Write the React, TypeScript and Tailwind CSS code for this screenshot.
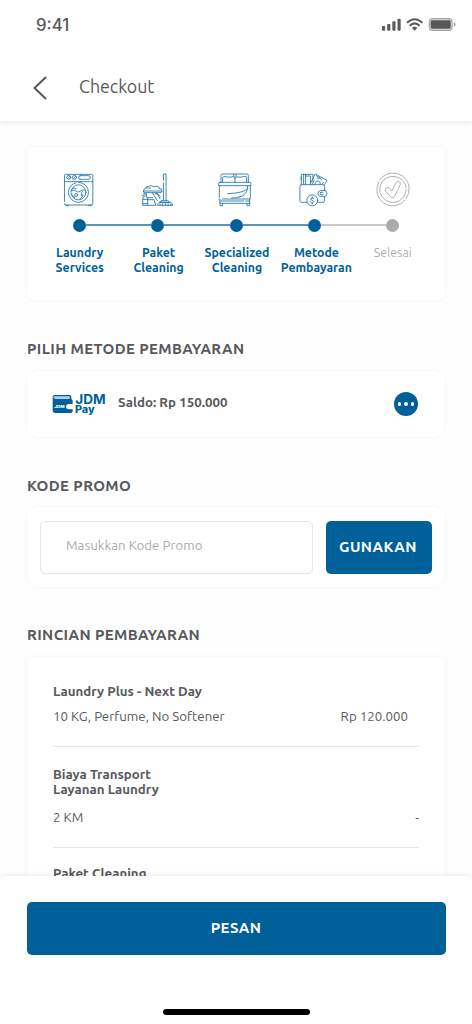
import type { ReactNode } from "react";

const CARD = "rounded-[6px] bg-white shadow-[0_0_4px_rgba(0,0,0,0.05)]";
const TITLE = "whitespace-nowrap text-[15px] font-semibold leading-[20px] tracking-[0.370px]";

function StatusIcons() {
  return (
    <svg width="76" height="16" viewBox="94 54 228 48" fill="#58595b">
      <rect x="97" y="81" width="9.500" height="14" rx="3" />
      <rect x="112.500" y="75" width="9.500" height="20" rx="3" />
      <rect x="128" y="67" width="9.500" height="28" rx="3" />
      <rect x="143.500" y="59" width="9.500" height="36" rx="3" />
      <g fill="none" stroke="#58595b" strokeWidth="6">
        <path d="M172 71.500Q195 50 218 71.500" />
        <path d="M180 80Q195 66.500 210 80" />
      </g>
      <path d="M187 87Q195 80 203 87L195 95Z" />
      <rect x="238.500" y="58.500" width="69" height="36" rx="9" fill="#d0d0d1" stroke="#a2a3a4" strokeWidth="3" />
      <rect x="243" y="64" width="60" height="25" rx="4" />
      <path d="M312 70Q318 72 318 76.500Q318 81 312 83Z" fill="#a8a9aa" />
    </svg>
  );
}

function StepIcon({ viewBox, gray, children }: { viewBox: string; gray?: boolean; children: ReactNode }) {
  return (
    <svg width="36" height="36" viewBox={viewBox} fill="none" stroke={gray ? "#aeaaaa" : "#2374a8"} strokeWidth={gray ? 2.8 : 2.6} strokeLinecap="round" strokeLinejoin="round">
      {children}
    </svg>
  );
}

const washer = (
  <StepIcon viewBox="33.600 36 108 108">
    <path d="M44 124V47Q44 43 48 43H125Q129 43 129 47V131Q129 135 125 135H48Q44 135 44 131M44 65H119M124 65H129M48 135V137H57M116 137H125V135" />
    <circle cx="57" cy="52" r="6" />
    <circle cx="74" cy="52" r="6" />
    <path d="M54 55L60 49M71 55L77 49" />
    <rect x="87" y="47" width="34" height="11" rx="4" />
    <path d="M86 67A30 30 0 0 1 116 97A30 30 0 0 1 56 97A30 30 0 0 1 78 68" />
    <circle cx="86" cy="97" r="22.500" />
    <path d="M65 92Q73 87 78 93T91 94Q97 86 106 91M67 87Q73 80 78 86M74 113Q70 105 67 104M98 94Q91 101 97 105T91 116" />
    <circle cx="79" cy="105" r="4.500" />
    <circle cx="96" cy="106" r="2" />
  </StepIcon>
);

const broom = (
  <StepIcon viewBox="268.800 36 108 108">
    <path d="M339 61V42H347V122M339 69V119M334 122H352Q355 122 357 127H328Q330 122 334 122ZM328 127H360Q365 128 367 136H321Q322 129 328 127M329 136V132M337 136V131M345 136V131M353 136V131M361 136V132" />
    <path d="M287 83Q288 77 295 79Q302 74 309 80Q316 77 322 80Q328 80 327 86Q334 84 335 91M279 95Q278 86 287 84H300M280 93H335L332 98H284L279 95M306 99L321 122M319 99L329 116M315 101Q323 100 330 109" />
    <path d="M280 101H288V106M279 107H275M281 104V111Q277 112 277 117V136H292V117Q292 112 287 111V104M277 118H292M277 131H292M292 113H307M292 119H311L316 136H292" />
  </StepIcon>
);

const bed = (
  <StepIcon viewBox="39 36 108 108">
    <path d="M48 66V45Q48 42 52 42H126Q130 42 130 46V66M53 66V53Q54 49 60 50Q74 53 88 50Q90 50 90 54V66M90 54Q91 49 97 51Q108 53 120 49Q125 49 125 54V66M86 43V49M93 43V49" />
    <path d="M42 67H135Q138 67 138 71V77H41V71Q41 67 45 67M43 77V112M136 77V117H52M43 117V120M128 78Q128 107 103 111M128 86Q118 99 68 101M103 111Q92 115 80 114" />
    <path d="M45 118V137H53V130H126V137H134V118M48 123H116M122 123H133M53 130H45M126 130H134" />
  </StepIcon>
);

const wallet = (
  <StepIcon viewBox="274.200 36 108 108">
    <path d="M360 91V79Q360 74 354 74H291Q286 74 286 79V122Q286 127 291 127H307M339 127H355Q360 127 360 121V110M290 74V43H325V65M297 43V73M303 43V73M303 48H318V73M290 50V60" />
    <path d="M316 73L332 42L367 61L360 74M323 73L328 62M335 47L347 54M338 54Q347 52 351 59M331 73Q332 61 341 63Q349 65 347 73M356 67L353 73" />
    <path d="M362 92H347Q340 93 340 101Q341 109 348 109H362Q367 108 367 101Q367 93 362 92M348 97H355M348 104H355M348 97Q344 101 348 104" />
    <circle cx="323" cy="121" r="16.500" />
    <path d="M328 116Q326 113 322 114Q317 116 320 120L325 122Q329 125 325 128Q320 129 318 126M323 110V114M323 128V132" />
  </StepIcon>
);

const done = (
  <StepIcon gray viewBox="134.400 96 108 108">
    <path d="M149 119A48 48 0 0 1 228 176M225 180A48 48 0 0 1 146 126" />
    <path d="M149 156A40 40 0 0 1 217 121M220 124A40 40 0 0 1 228 143M228 148A40 40 0 0 1 150 160" />
    <path d="M185 153L196 130Q199 124 205 124Q213 126 210 134L205 145M203 150L193 169Q189 176 182 171L167 155Q163 149 168 144Q174 139 179 145L185 152" />
  </StepIcon>
);

const steps = [
  { icon: washer, lines: ["Laundry", "Services"], pad: "pl-[1px]" },
  { icon: broom, lines: ["Paket", "Cleaning"], pad: "pl-[2px]" },
  { icon: bed, lines: ["Specialized", "Cleaning"], pad: "pl-[2px]" },
  { icon: wallet, lines: ["Metode", "Pembayaran"], pad: "pl-[4px]" },
  { icon: done, lines: ["Selesai"], pad: "" },
];

function lineColor(visible: boolean, gray: boolean) {
  if (!visible) return "bg-transparent";
  return gray ? "bg-[#cbc8c9]" : "bg-[#5595be]";
}

function Stepper() {
  return (
    <section className={`${CARD} grid h-[153px] grid-cols-5 px-[13px] pt-[25px]`}>
      {steps.map((s, i) => (
        <div key={i} className="flex min-w-0 flex-col items-center">
          {s.icon}
          <div className="mt-[11px] flex h-[13px] w-full items-center">
            <span className={`mb-px h-[2px] flex-1 ${lineColor(i > 0, i === 4)}`} />
            <span className={`size-[13px] rounded-full ${i === 4 ? "bg-[#aeaaaa]" : "bg-[#00609a]"}`} />
            <span className={`mb-px h-[2px] flex-1 ${lineColor(i < 4, i === 3)}`} />
          </div>
          <div className={`mt-[14px] flex flex-col items-center whitespace-nowrap text-[12.300px] leading-[14.500px] ${s.pad} ${i === 4 ? "text-[#b3afb0]" : "font-bold text-[#00609a]"}`}>
            {s.lines.map((l) => (
              <span key={l}>{l}</span>
            ))}
          </div>
        </div>
      ))}
    </section>
  );
}

function PayLogo() {
  return (
    <svg className="overflow-visible" width="54" height="21" viewBox="97 190 162 63" fill="#00609a">
      <path d="M99 198Q99 193 105 193H149Q155 193 155 199V205Q159 206 159 211V220H146Q139 221 139 228Q139 235 146 236H159V242Q159 247 153 247H107Q99 247 99 239Z" />
      <path d="M105 197H148Q151 197 151 200L149 205H107Q102 203 102 200Q103 197 105 197Z" fill="#b6d0e1" />
      <path d="M159 223H147Q142 223 142 228Q142 233 147 233H159V229H149V227H159Z" fill="#fff" />
      <text x="104" y="231" fontFamily="Inter, sans-serif" fontWeight="800" fontSize="10" textLength="31" lengthAdjust="spacingAndGlyphs" fill="#fff">JDM</text>
      <text x="167" y="221" fontFamily="Inter, sans-serif" fontWeight="700" fontSize="38" textLength="91" lengthAdjust="spacingAndGlyphs">JDM</text>
      <text x="166" y="246" fontFamily="Inter, sans-serif" fontWeight="800" fontSize="29" textLength="59" lengthAdjust="spacingAndGlyphs">Pay</text>
    </svg>
  );
}

export default function App() {
  return (
    <div className="flex h-[1024px] w-[472px] flex-col overflow-hidden bg-[#fefefe] font-['Ubuntu','Noto_Sans',sans-serif] text-[#58595b]">
      <header className="relative z-10 h-[121px] shrink-0 bg-white shadow-[0_2px_5px_rgba(0,0,0,0.08)]">
        <div className="flex h-[50px] items-center justify-between pl-[36px] pr-[15px]">
          <span className="font-['Inter',sans-serif] text-[16.800px] font-medium leading-[20px]">9:41</span>
          <StatusIcons />
        </div>
        <div className="flex h-[72px] items-center pl-[32px]">
          <svg className="mt-[4px]" width="16" height="26" viewBox="0 0 16 26" fill="none" stroke="#58595b" strokeWidth="2" strokeLinecap="round" strokeLinejoin="round">
            <path d="M13.500 2.500L2.500 13L13.500 23.500" />
          </svg>
          <h1 className="mb-px ml-[31px] text-[17.800px] leading-[24px]">Checkout</h1>
        </div>
      </header>

      <main className="flex min-h-0 flex-1 flex-col overflow-hidden px-[27px] pt-[26px] *:shrink-0">
        <Stepper />

        <h2 className={`${TITLE} mt-[39px]`}>PILIH METODE PEMBAYARAN</h2>
        <section className="mt-[12px] flex h-[66px] items-center rounded-[12px] bg-white pl-[25px] pr-[27px] shadow-[0_0_4px_rgba(0,0,0,0.05)]">
          <PayLogo />
          <span className="ml-[12px] flex-1 whitespace-nowrap pb-[3px] text-[13.300px] font-semibold">Saldo: Rp 150.000</span>
          <button className="flex size-[24px] items-center justify-center gap-[3px] rounded-full bg-[#00609a]">
            <i className="size-[3.200px] rounded-full bg-white" />
            <i className="size-[3.200px] rounded-full bg-white" />
            <i className="size-[3.200px] rounded-full bg-white" />
          </button>
        </section>

        <h2 className={`${TITLE} mt-[39px]`}>KODE PROMO</h2>
        <section className="mt-[11px] flex h-[80px] items-center justify-between rounded-[12px] bg-white px-[13px] shadow-[0_0_4px_rgba(0,0,0,0.05)]">
          <div className="flex h-[53px] w-[272.500px] items-center rounded-[5px] border border-[#e6e6e6] pb-[2px] pl-[25px]">
            <span className="whitespace-nowrap text-[13.300px] text-[#aeaaaa]">Masukkan Kode Promo</span>
          </div>
          <button className="h-[53px] w-[106px] rounded-[5px] bg-[#00609a] pr-[2px] text-[15px] font-bold tracking-[0.450px] text-white">GUNAKAN</button>
        </section>

        <h2 className={`${TITLE} mt-[38px]`}>RINCIAN PEMBAYARAN</h2>
        <section className={`${CARD} mt-[12px] h-[300px] px-[26px] pt-[25px] text-[13.300px]`}>
          <div className="h-[65px] border-b border-[#e6e6e6]">
            <h3 className="font-semibold leading-[20px]">Laundry Plus - Next Day</h3>
            <div className="mt-[5px] flex justify-between pr-[11px] leading-[20px]">
              <span>10 KG, Perfume, No Softener</span>
              <span>Rp 120.000</span>
            </div>
          </div>
          <div className="h-[101px] border-b border-[#e6e6e6] pt-[20px]">
            <h3 className="font-semibold leading-[15px]">Biaya Transport<br />Layanan Laundry</h3>
            <div className="mt-[11px] flex justify-between leading-[20px]">
              <span>2 KM</span>
              <span>-</span>
            </div>
          </div>
          <h3 className="pt-[16px] font-semibold leading-[20px]">Paket Cleaning</h3>
        </section>
      </main>

      <footer className="relative z-10 flex h-[148px] shrink-0 flex-col items-center rounded-t-[7px] bg-white px-[26.500px] pt-[26px] shadow-[0_-2px_5px_rgba(0,0,0,0.06)]">
        <button className="h-[52.500px] w-full rounded-[5px] bg-[#00609a] text-[15px] font-semibold tracking-[0.400px] text-white">PESAN</button>
        <div className="mt-[54.500px] h-[6px] w-[147px] rounded-full bg-black" />
      </footer>
    </div>
  );
}
